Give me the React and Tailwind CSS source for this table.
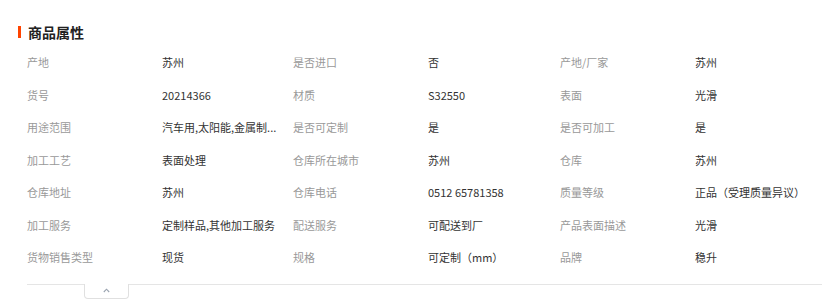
import React from 'react';

const rows = [
  [['产地', '苏州'], ['是否进口', '否'], ['产地/厂家', '苏州']],
  [['货号', '20214366'], ['材质', 'S32550'], ['表面', '光滑']],
  [['用途范围', '汽车用,太阳能,金属制...'], ['是否可定制', '是'], ['是否可加工', '是']],
  [['加工工艺', '表面处理'], ['仓库所在城市', '苏州'], ['仓库', '苏州']],
  [['仓库地址', '苏州'], ['仓库电话', '0512 65781358'], ['质量等级', '正品（受理质量异议）']],
  [['加工服务', '定制样品,其他加工服务'], ['配送服务', '可配送到厂'], ['产品表面描述', '光滑']],
  [['货物销售类型', '现货'], ['规格', '可定制（mm）'], ['品牌', '稳升']],
];

export default function App() {
  return (
    <div
      className="w-[822px] h-[307px] bg-white overflow-hidden"
      style={{ fontFamily: '"Noto Sans CJK SC", "Liberation Sans", sans-serif' }}
    >
      <div className="pt-[24px] pl-[18px]">
        <div className="flex items-center h-[16px]">
          <span className="w-[3px] h-[12px] bg-[#ff4400]" />
          <h2 className="ml-[7px] text-[14px] leading-[16px] font-bold text-[#222]">商品属性</h2>
        </div>

        <div className="mt-[6px] pl-[9px]">
          {rows.map((row, i) => (
            <div key={i} className="grid grid-cols-[135px_131px_135px_132px_135px_1fr] h-[32.5px] items-center text-[11px]">
              {row.map(([label, value]) => (
                <React.Fragment key={label}>
                  <span className="text-[#999] whitespace-nowrap">{label}</span>
                  <span className="text-[#333] whitespace-nowrap">{value}</span>
                </React.Fragment>
              ))}
            </div>
          ))}
        </div>

        <div className="relative mt-[10px] ml-[9px] border-t border-[#e5e5e5]">
          <button className="absolute left-[57px] -top-px w-[45px] h-[15px] bg-white border border-t-0 border-[#e0e0e0] rounded-b-[4px] flex items-center justify-center">
            <svg width="7" height="5" viewBox="0 0 7 5" fill="none" stroke="#9aa3b0" strokeWidth="1.1">
              <path d="M0.8 4 L3.5 1.2 L6.2 4" />
            </svg>
          </button>
        </div>
      </div>
    </div>
  );
}
